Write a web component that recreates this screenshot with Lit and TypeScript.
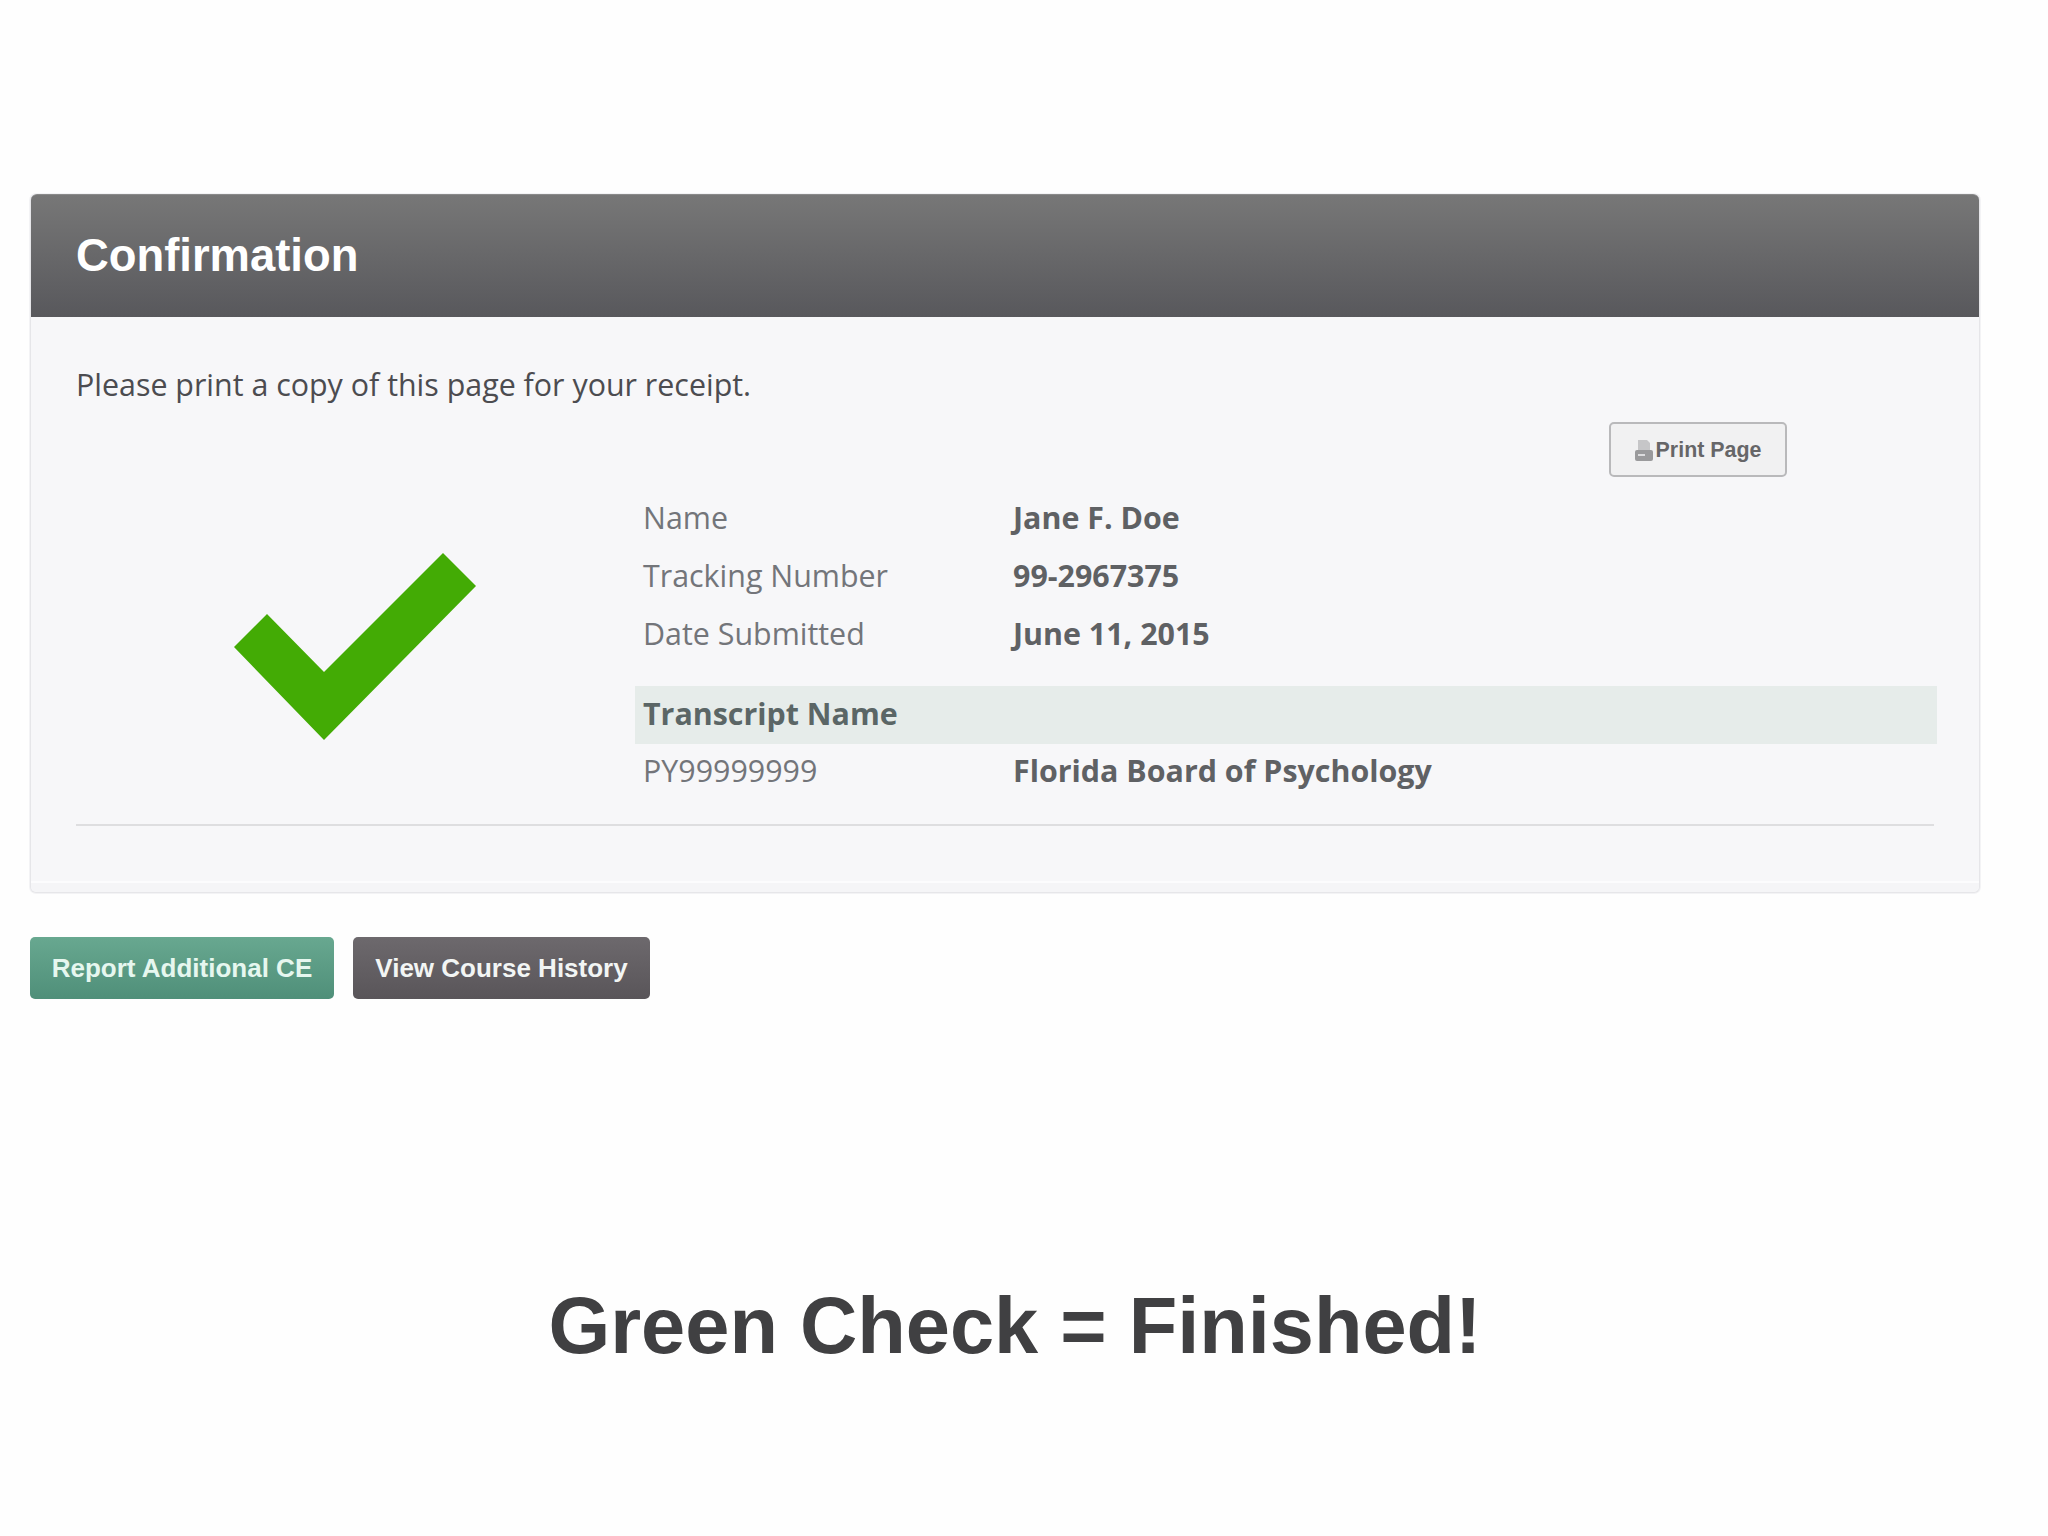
import { LitElement, html, css } from "lit";
import { customElement } from "lit/decorators.js";

@customElement("app-root")
export class AppRoot extends LitElement {
  static styles = css`
    :host {
      display: block;
      width: 2048px;
      height: 1536px;
      box-sizing: border-box;
      padding: 194px 0 0 30px;
      background: #fefefe;
      font-family: "Open Sans", sans-serif;
      overflow: hidden;
    }
    .card {
      width: 1950px;
      height: 699px;
      box-sizing: border-box;
      background: #f7f7f9;
      border: 1px solid #e6e6e9;
      border-top: 0;
      border-radius: 6px;
      box-shadow: 0 0 0 1px #f3f3f5;
      display: flex;
      flex-direction: column;
    }
    .head {
      height: 123px;
      flex: none;
      border-radius: 6px 6px 0 0;
      background: linear-gradient(#777777, #58585c);
      border-top: 1px solid #8a8a8a;
      box-sizing: border-box;
      display: flex;
      align-items: center;
      padding: 0 0 0 45px;
      color: #fff;
      font: bold 45.4px "Liberation Sans", sans-serif;
    }
    .intro {
      margin: 47px 0 0 45px;
      font-size: 30.4px;
      line-height: 42px;
      color: #4c4c50;
    }
    .print-row {
      display: flex;
      justify-content: flex-end;
      padding-right: 192px;
      margin-top: 16px;
    }
    .print {
      width: 178px;
      height: 55px;
      box-sizing: border-box;
      border: 2px solid #b9b9bb;
      border-radius: 5px;
      background: #f1f1f2;
      display: flex;
      align-items: center;
      justify-content: center;
      gap: 3px;
      padding-top: 2px;
      color: #666668;
      font: bold 21.4px "Liberation Sans", sans-serif;
    }
    .print svg { width: 18px; height: 23px; flex: none; }
    .main {
      display: flex;
      margin-top: 11px;
    }
    .mark {
      width: 603px;
      flex: none;
      padding: 65px 0 0 203px;
      box-sizing: border-box;
    }
    .mark svg { display: block; width: 242px; height: 187px; }
    .details { width: 1302px; margin-left: 1px; font-size: 30.4px; color: #73757a; }
    .row {
      display: grid;
      grid-template-columns: 370px 1fr;
      padding-left: 8px;
      height: 58px;
      box-sizing: border-box;
      align-items: center;
    }
    .row b { color: #5f6164; font-weight: 700; }
    .band {
      margin-top: 24px;
      padding-bottom: 3px;
      background: #e6ecea;
      color: #5b6666;
      font-weight: 700;
    }
    .last { padding-bottom: 5px; }
    .rule {
      margin: 22px 45px 0 45px;
      height: 2px;
      background: #dedee0;
      flex: none;
    }
    .foot {
      margin-top: auto;
      height: 11px;
      flex: none;
      box-sizing: border-box;
      border-top: 2px solid #fcfcfd;
      background: #f5f5f7;
      border-radius: 0 0 6px 6px;
    }
    .actions {
      display: flex;
      gap: 19px;
      margin-top: 44px;
    }
    .btn {
      height: 62px;
      border-radius: 5px;
      display: flex;
      align-items: center;
      justify-content: center;
      color: #f2f5f4;
      font: bold 26px "Liberation Sans", sans-serif;
      box-sizing: border-box;
    }
    .green { width: 304px; background: linear-gradient(#68a890, #4f8f79); color: #e6f7ef; }
    .gray { width: 297px; background: linear-gradient(#6d696d, #595559); }
    .finish {
      width: 2030px;
      margin: 277px 0 0 -30px;
      text-align: center;
      color: #404042;
      font: bold 79.4px/100px "Liberation Sans", sans-serif;
    }
  `;

  render() {
    return html`
      <div class="card">
        <div class="head">Confirmation</div>
        <div class="intro">Please print a copy of this page for your receipt.</div>
        <div class="print-row">
          <div class="print">
            <svg viewBox="0 0 18 23" aria-hidden="true">
              <path d="M3 1h9l3 3v8H3z" fill="#c6c6c8" />
              <rect x="0" y="11" width="18" height="11" rx="2" fill="#9a9a9c" />
              <rect x="3" y="15" width="7" height="2" fill="#dcdcde" />
            </svg>
            <span>Print Page</span>
          </div>
        </div>
        <div class="main">
          <div class="mark">
            <svg viewBox="0 0 242 187" aria-hidden="true">
              <polygon points="0,94 33,61 90,119 209,0 242,33 90,187" fill="#43ab05" />
            </svg>
          </div>
          <div class="details">
            <div class="row"><span>Name</span><b>Jane F. Doe</b></div>
            <div class="row"><span>Tracking Number</span><b>99-2967375</b></div>
            <div class="row"><span>Date Submitted</span><b>June 11, 2015</b></div>
            <div class="row band"><span>Transcript Name</span></div>
            <div class="row last"><span>PY99999999</span><b>Florida Board of Psychology</b></div>
          </div>
        </div>
        <div class="rule"></div>
        <div class="foot"></div>
      </div>
      <div class="actions">
        <div class="btn green">Report Additional CE</div>
        <div class="btn gray">View Course History</div>
      </div>
      <div class="finish">Green Check = Finished!</div>
    `;
  }
}
